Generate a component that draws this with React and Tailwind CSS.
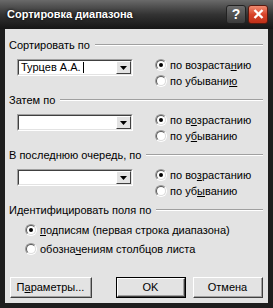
import React from 'react'

const font = { fontFamily: '"Liberation Sans", Arial, sans-serif' }

function Radio({ checked }) {
    return (
        <span className="w-[12px] h-[12px] rounded-full border border-t-[#9a9a9a] border-l-[#9a9a9a] border-b-white border-r-white flex items-center justify-center shrink-0">
            <span className="w-[10px] h-[10px] rounded-full border border-t-[#5a5a5a] border-l-[#5a5a5a] border-b-[#dcdcdc] border-r-[#dcdcdc] bg-white flex items-center justify-center">
                {checked && <span className="w-[4px] h-[4px] rounded-full bg-black" />}
            </span>
        </span>
    )
}

function RadioRow({ checked, children }) {
    return (
        <div className="h-[16px] flex items-center gap-[3px]">
            <Radio checked={checked} />
            <span className="leading-none">{children}</span>
        </div>
    )
}

function Combo({ value }) {
    return (
        <div className="w-[116px] h-[17px] border border-t-[#a0a0a0] border-l-[#a0a0a0] border-b-white border-r-white">
            <div className="h-full border border-t-[#404040] border-l-[#404040] border-b-[#e3e3e3] border-r-[#e3e3e3] bg-white flex items-center">
                <div className="flex-1 flex items-center pl-[2px] leading-none">
                    {value && (
                        <>
                            <span>{value}</span>
                            <span className="w-px h-[11px] bg-black ml-[2px]" />
                        </>
                    )}
                </div>
                <div className="w-[15px] h-[13px] bg-[#e3e3e3] border border-t-white border-l-white border-b-[#404040] border-r-[#404040] flex items-center justify-center">
                    <svg width="7" height="4" viewBox="0 0 7 4"><path d="M0 0h7L3.5 4z" fill="#000" /></svg>
                </div>
            </div>
        </div>
    )
}

function GroupLabel({ children }) {
    return (
        <div className="h-[14px] flex items-center gap-[5px]">
            <span className="leading-none whitespace-nowrap">{children}</span>
            <div className="flex-1 border-t border-t-[#a0a0a0] border-b border-b-white" />
        </div>
    )
}

function SortGroup({ value, asc, desc }) {
    return (
        <div className="h-[55px] flex flex-col">
            <GroupLabel>{asc.label}</GroupLabel>
            <div className="flex mt-[5px]">
                <div className="ml-[8px] mt-[2px]">
                    <Combo value={value} />
                </div>
                <div className="ml-[22px] flex flex-col">
                    <RadioRow checked>{asc.text}</RadioRow>
                    <RadioRow>{desc}</RadioRow>
                </div>
            </div>
        </div>
    )
}

function Button({ children, primary }) {
    const face = (
        <div className={(primary ? "h-[19px]" : "h-[21px]") + " border border-t-white border-l-white border-b-[#404040] border-r-[#404040] bg-[#e3e3e3]"}>
            <div className="h-full border-r border-b border-r-[#a0a0a0] border-b-[#a0a0a0] flex items-center justify-center leading-none">
                {children}
            </div>
        </div>
    )
    return primary ? <div className="border border-black">{face}</div> : face
}

export default function App() {
    return (
        <div className="w-[273px] h-[308px] bg-[#1e1e1e] flex flex-col text-[11px] text-black" style={font}>
            <div className="h-[29px] bg-gradient-to-b from-[#6a6a6a] via-[#333333] to-[#161616] flex items-center pl-[7px] pr-[5px]">
                <span className="flex-1 text-white font-bold text-[11px] [text-shadow:0_0_3px_#000]">Сортировка диапазона</span>
                <div className="flex gap-[2px] mt-[-1px]">
                    <div className="w-[20px] h-[19px] rounded-[3px] border border-[#222] bg-gradient-to-b from-[#6c6c6c] to-[#3c3c3c] flex items-center justify-center text-white font-bold text-[14px] leading-none">?</div>
                    <div className="w-[20px] h-[19px] rounded-[3px] border border-[#5a1a10] bg-gradient-to-b from-[#f08a70] via-[#d8432a] to-[#c03018] flex items-center justify-center">
                        <svg width="11" height="10" viewBox="0 0 11 10"><path d="M1.5 1l8 8M9.5 1l-8 8" stroke="#fff" strokeWidth="2.4" /></svg>
                    </div>
                </div>
            </div>
            <div className="flex-1 mx-[5px] mb-[5px] bg-[#e3e3e3] pl-[4px] pr-[5px] pt-[9px] flex flex-col">
                <SortGroup value="Турцев А.А." asc={{ label: 'Сортировать по', text: <>по возраста<u>н</u>ию</> }} desc={<>по убывани<u>ю</u></>} />
                <SortGroup asc={{ label: 'Затем по', text: <>по в<u>о</u>зрастанию</> }} desc={<>по у<u>б</u>ыванию</>} />
                <SortGroup asc={{ label: 'В последнюю очередь, по', text: <>по во<u>з</u>растанию</> }} desc={<>по уб<u>ы</u>ванию</>} />
                <GroupLabel>Идентифицировать поля по</GroupLabel>
                <div className="flex flex-col gap-[3px] mt-[5px] ml-[16px]">
                    <RadioRow checked><u>п</u>одписям (первая строка диапазона)</RadioRow>
                    <RadioRow>обозна<u>ч</u>ениям столбцов листа</RadioRow>
                </div>
                <div className="flex mt-[20px]">
                    <div className="w-[82px] ml-[1px]"><Button>П<u>а</u>раметры...</Button></div>
                    <div className="w-[70px] ml-[24px]"><Button primary>OK</Button></div>
                    <div className="w-[70px] ml-[7px]"><Button>Отмена</Button></div>
                </div>
            </div>
        </div>
    )
}
